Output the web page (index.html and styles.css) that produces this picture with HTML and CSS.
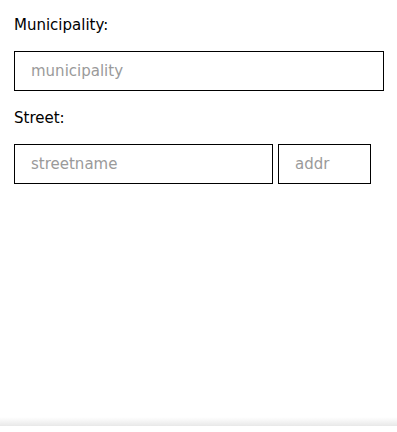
FILE: index.html
```html
<!DOCTYPE html>
<html lang="en">
<head>
    <meta charset="UTF-8">
    <title>Address</title>
    <link rel="stylesheet" href="styles.css">
</head>
<body>
<div class="page">
    <form class="address">
        <label class="label" for="municipality">Municipality:</label>
        <input class="input" id="municipality" type="text" placeholder="municipality">

        <label class="label" for="street">Street:</label>
        <div class="row">
            <input class="input input-street" id="street" type="text" placeholder="streetname">
            <input class="input input-addr" type="text" placeholder="addr">
        </div>
    </form>
    <div class="shade"></div>
</div>
</body>
</html>
```

FILE: styles.css
```css
*{margin: 0; padding: 0; box-sizing: border-box}
html, body {
    width: 100%;
    height: 100%;
    background: #ffffff;
}
body {
    font-family: "DejaVu Sans", Verdana, sans-serif;
    font-size: 15px;
    color: #000000;
}
.page {
    display: flex;
    flex-direction: column;
    height: 100%;
}
.address {
    flex: 1;
    padding: 16px 13px 0 14px;
}
.label {
    display: block;
    line-height: 18px;
    margin-bottom: 17px;
}
.input {
    display: block;
    width: 100%;
    height: 40px;
    padding: 0 16px;
    border: 1px solid #000000;
    border-radius: 0;
    font-family: inherit;
    font-size: 15px;
    color: #000000;
    background: #ffffff;
    outline: none;
    margin-bottom: 18px;
}
.input::placeholder {
    color: #9a9a9a;
}
.row {
    display: flex;
    gap: 5px;
}
.row .input-street {
    width: 70%;
}
.row .input-addr {
    width: 25%;
}
/* bottom edge */
.shade {
    height: 9px;
    margin-bottom: 6px;
    background: linear-gradient(to bottom, rgba(0, 0, 0, 0), rgba(0, 0, 0, 0.09));
}
```
